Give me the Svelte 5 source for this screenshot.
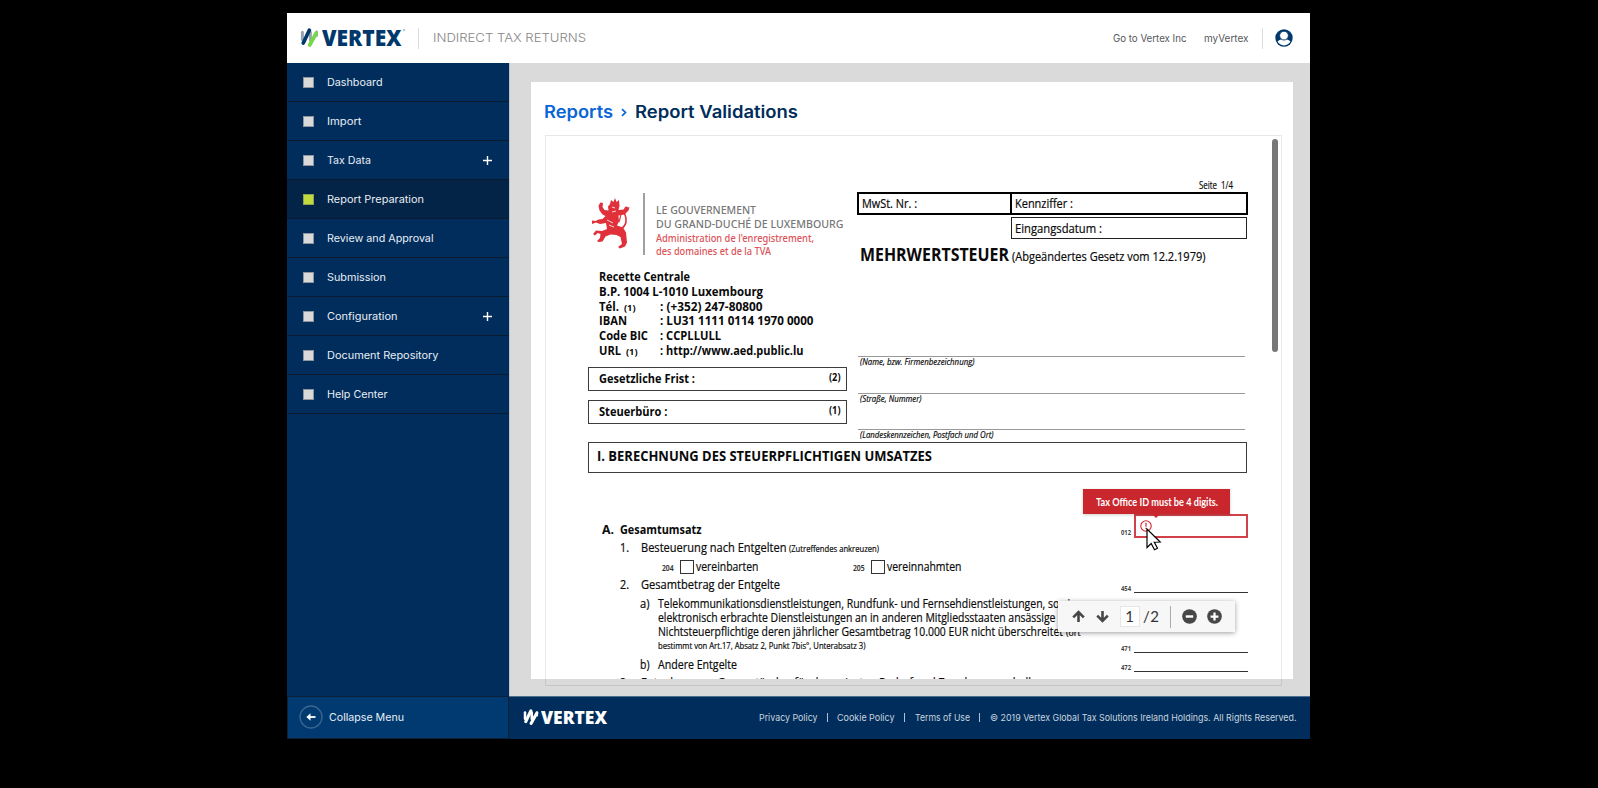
<script>
  // Stretches or condenses a run of text to the given width.
  function fit(node, width) {
    const natural = node.getBoundingClientRect().width;
    node.style.width = `${width}px`;
    node.style.transform = `scaleX(${width / natural})`;
  }

  const menu = [
    { label: 'Dashboard', w: 55.5 },
    { label: 'Import', w: 34.5 },
    { label: 'Tax Data', w: 44, plus: true },
    { label: 'Report Preparation', w: 97, active: true },
    { label: 'Review and Approval', w: 106.5 },
    { label: 'Submission', w: 59 },
    { label: 'Configuration', w: 70.5, plus: true },
    { label: 'Document Repository', w: 111.5 },
    { label: 'Help Center', w: 60.5 }
  ];

  const address = [
    { key: 'Tél.', kw: 20, note: true, value: ': (+352) 247-80800', w: 102.5 },
    { key: 'IBAN', kw: 28, value: ': LU31 1111 0114 1970 0000', w: 153.5 },
    { key: 'Code BIC', kw: 49, value: ': CCPLLULL', w: 61 },
    { key: 'URL', kw: 22, note: true, value: ': http://www.aed.public.lu', w: 143.5 }
  ];
</script>

{#snippet t(text, w, cls = '')}<span class="fit {cls}" use:fit={w}>{text}</span>{/snippet}

{#snippet mark(c1, c2, c3, c4)}
  <svg class="mark" viewBox="0 0 18 19" fill="none" stroke-linecap="round">
    <path d="M1.900 4.300V11.500" stroke={c1} stroke-width="3" />
    <path d="M9.900 4.300V12" stroke={c3} stroke-width="3" />
    <path d="M16.200 3.800v4" stroke={c3} stroke-width="2.400" />
    <path d="M8.800 2.200 2.800 15" stroke={c2} stroke-width="3.700" />
    <path d="M15.800 5 9.200 17" stroke={c4} stroke-width="3.700" />
  </svg>
{/snippet}

<div class="stage">
  <div class="app">
    <header>
      <div class="logo">
        {@render mark('#9aa3ad', '#00386b', '#9aa3ad', '#78d64b')}
        {@render t('VERTEX', 79.5)}<i></i>
      </div>
      <span class="rule"></span>
      <div class="product">{@render t('INDIRECT TAX RETURNS', 153)}</div>
      <nav>
        {@render t('Go to Vertex Inc', 73.5)}
        {@render t('myVertex', 44.5)}
      </nav>
      <span class="rule"></span>
      <svg class="user" viewBox="0 0 18 18">
        <circle cx="9" cy="9" r="8.700" fill="#00386b" />
        <path d="M2.500 12.600C4 10.700 6 10.300 9 10.300s5 .4 6.500 2.300C14.200 15 12 16.400 9 16.400S3.800 15 2.500 12.600Z" fill="#fff" />
        <circle cx="9" cy="6.600" r="4.400" fill="#fff" stroke="#00386b" stroke-width=".9" />
      </svg>
    </header>

    <div class="body">
      <aside>
        <ul>
          {#each menu as item}
            <li class:active={item.active}>
              <b></b>
              {@render t(item.label, item.w)}
              {#if item.plus}
                <svg class="plus" viewBox="0 0 9 9"><path d="M4.500 0v9M0 4.500h9" stroke="#fff" stroke-width="1.400" /></svg>
              {/if}
            </li>
          {/each}
        </ul>
        <div class="collapse">
          <svg viewBox="0 0 24 24" fill="none">
            <circle cx="12" cy="12" r="11" stroke="#3a6690" stroke-width="1.300" />
            <path d="M16.500 12H8.500" stroke="#fff" stroke-width="1.800" />
            <path d="M7.400 12l4.100-3.700v7.400z" fill="#fff" />
          </svg>
          {@render t('Collapse Menu', 75)}
        </div>
      </aside>

      <main>
        <section class="content">
          <div class="panel">
            <h1>
              {@render t('Reports', 69, 'blue')}
              <svg viewBox="0 0 6 8" fill="none"><path d="M1 .7 4.500 4 1 7.300" stroke="#0a66d6" stroke-width="1.700" /></svg>
              {@render t('Report Validations', 163)}
            </h1>
            <div class="viewer">
              <div class="page">
                <div class="top">
                  <div class="left">
                    <div class="brand">
                      <svg class="lion" viewBox="0 0 39 52" fill="#e0313a">
                        <path d="M18 6l1-4 2.500 2L23 0l1.500 4L27 2l.5 6-1 4 6-.5 3-2.500 2 .5-1 3-4 4-6 1 .5 6-2 4 6 2 3 5 1 10-2 4-5 2-2-1.500 4-3-1.500-7-4-2-6-.5-5 2-3 5-4 .5-1.500-1 3-3 .500-4-3-1-2.500 2.500-2-1.500 3-3.500 6 .5 5-2-1-6-6 1-4-1.500-5 2-1.500-2.500 3-1.500 3 .5 3-1.500 4-.5 3-3-3-1.500-3-4-1-5 2-3 2.500.5-.5 4 2 3 4 .5-.5-4z" />
                        <path d="M29 31c6-4 6-10 4-14s0-8 2-8" fill="none" stroke="#e0313a" stroke-width="1.600" />
                        <path d="M27 24c2-5 1-8 4-12" fill="none" stroke="#e0313a" stroke-width="1.200" />
                        <path d="M15 22l6 3M17 27l5 2M20 9l3 1M20 14l4-1" stroke="#fff" stroke-width=".8" />
                      </svg>
                      <span class="bar"></span>
                      <div class="gov">
                        <div>{@render t('LE GOUVERNEMENT', 100)}</div>
                        <div>{@render t('DU GRAND-DUCHÉ DE LUXEMBOURG', 187.500)}</div>
                        <div class="red">{@render t("Administration de l'enregistrement,", 158)}</div>
                        <div class="red">{@render t('des domaines et de la TVA', 115)}</div>
                      </div>
                    </div>
                    <div class="address">
                      <div>{@render t('Recette Centrale', 91)}</div>
                      <div>{@render t('B.P. 1004 L-1010 Luxembourg', 164)}</div>
                      {#each address as a}
                        <div>
                          <span class="key">{@render t(a.key, a.kw)}{#if a.note}{@render t('(1)', 11.500, 'note')}{/if}</span>
                          {@render t(a.value, a.w)}
                        </div>
                      {/each}
                    </div>
                    <div class="box">{@render t('Gesetzliche Frist :', 96)}{@render t('(2)', 11.500, 'num')}</div>
                    <div class="box">{@render t('Steuerbüro :', 68.500)}{@render t('(1)', 11.500, 'num')}</div>
                  </div>

                  <div class="right">
                    <div class="seite">{@render t('Seite  1/4', 34)}</div>
                    <div class="ids">
                      <div>{@render t('MwSt. Nr. :', 55)}</div>
                      <div>{@render t('Kennziffer :', 58)}</div>
                    </div>
                    <div class="date">{@render t('Eingangsdatum :', 87)}</div>
                    <div class="law">{@render t('MEHRWERTSTEUER', 149, 'big')}{@render t('(Abgeändertes Gesetz vom 12.2.1979)', 193.500)}</div>
                    <div class="line">{@render t('(Name, bzw. Firmenbezeichnung)', 114.500)}</div>
                    <div class="line">{@render t('(Straße, Nummer)', 61.500)}</div>
                    <div class="line">{@render t('(Landeskennzeichen, Postfach und Ort)', 133.500)}</div>
                  </div>
                </div>

                <div class="section">{@render t('I. BERECHNUNG DES STEUERPFLICHTIGEN UMSATZES', 335)}</div>

                <div class="calc">
                  <div class="items">
                    <div class="row a">{@render t('A.', 12)}{@render t('Gesamtumsatz', 81.500)}</div>
                    <div class="row n one">{@render t('1.', 9)}{@render t('Besteuerung nach Entgelten', 145.500)}{@render t('(Zutreffendes ankreuzen)', 90, 'small')}</div>
                    <div class="row checks">
                      <div>{@render t('204', 11.500, 'code')}<i></i>{@render t('vereinbarten', 62.500)}</div>
                      <div>{@render t('205', 11.500, 'code')}<i></i>{@render t('vereinnahmten', 74.500)}</div>
                    </div>
                    <div class="row n two">{@render t('2.', 9)}{@render t('Gesamtbetrag der Entgelte', 139)}</div>
                    <div class="row l">
                      {@render t('a)', 9.500)}
                      <div class="para">
                        <div>{@render t('Telekommunikationsdienstleistungen, Rundfunk- und Fernsehdienstleistungen, sowie', 418)}</div>
                        <div>{@render t('elektronisch erbrachte Dienstleistungen an in anderen Mitgliedsstaaten ansässige', 397.500)}</div>
                        <div>{@render t('Nichtsteuerpflichtige deren jährlicher Gesamtbetrag 10.000 EUR nicht überschreitet', 405)}{@render t('(ort', 14.500, 'small')}</div>
                        <div>{@render t('bestimmt von Art.17, Absatz 2, Punkt 7bis°, Unterabsatz 3)', 207.500, 'small first')}</div>
                      </div>
                    </div>
                    <div class="row l b">{@render t('b)', 9.500)}{@render t('Andere Entgelte', 79)}</div>
                    <div class="row n three">{@render t('3.', 9)}{@render t('Entnahme von Gegenständen für den privaten Bedarf und Zwecke ausserhalb', 394)}</div>
                  </div>
                  <div class="fields">
                    <div class="field bad">{@render t('012', 10)}<div class="input">
                        <svg viewBox="0 0 12 12" fill="none" stroke="#cc2730"><circle cx="6" cy="6" r="5.200" stroke-width="1.100" /><path d="M6 2.800v4M6 7.800v1.300" stroke-width="1.200" /></svg>
                      </div>
                      <div class="tip">{@render t('Tax Office ID must be 4 digits.', 122)}</div>
                      <svg class="cursor" viewBox="0 0 16 23"><path d="M1 1v18.500l4.200-4 3.300 6.300 3-1.500-3.200-6.100 5.900-.2z" fill="#fff" stroke="#000" stroke-width="1.200" /></svg>
                    </div>
                    <div class="field f454">{@render t('454', 10)}<span></span></div>
                    <div class="field f471">{@render t('471', 10)}<span></span></div>
                    <div class="field f472">{@render t('472', 10)}<span></span></div>
                  </div>
                </div>
              </div>
              <span class="thumb"></span>
              <div class="toolbar">
                <svg class="arrow" viewBox="0 0 14 14" fill="none" stroke="#474747" stroke-width="2.800"><path d="M7 13V2.800M1.300 8 7 2.300 12.700 8" /></svg>
                <svg class="arrow down" viewBox="0 0 14 14" fill="none" stroke="#474747" stroke-width="2.800"><path d="M7 1v10.200M1.300 6 7 11.700 12.700 6" /></svg>
                <span class="current">1</span>
                <span class="total">/2</span>
                <span class="sep"></span>
                <svg class="zoom" viewBox="0 0 16 16"><circle cx="8" cy="8" r="7.800" fill="#474747" /><path d="M4 8h8" stroke="#fff" stroke-width="2.600" /></svg>
                <svg class="zoom" viewBox="0 0 16 16"><circle cx="8" cy="8" r="7.800" fill="#474747" /><path d="M3.800 8h8.400M8 3.800v8.400" stroke="#fff" stroke-width="2.400" /></svg>
              </div>
            </div>
          </div>
        </section>
        <footer>
          <div class="logo small-logo">
            {@render mark('#fff', '#fff', '#fff', '#fff')}
            {@render t('VERTEX', 66)}
          </div>
          <div class="legal">
            {@render t('Privacy Policy', 58.500)}<em></em>
            {@render t('Cookie Policy', 57.500)}<em></em>
            {@render t('Terms of Use', 55)}<em></em>
            {@render t('© 2019 Vertex Global Tax Solutions Ireland Holdings. All Rights Reserved.', 306.500)}
          </div>
        </footer>
      </main>
    </div>
  </div>
</div>

<style>
  :global(body) { background: #000; }
  .stage {
    box-sizing: border-box;
    width: 1598px;
    height: 788px;
    padding: 13px 288px 0 287px;
    background: #000;
    overflow: hidden;
    font-family: Inter, sans-serif;
  }
  .stage :global(svg) { display: block; flex: none; }
  .fit {
    display: inline-block;
    flex: none;
    white-space: pre;
    transform-origin: 0 50%;
  }
  .app { width: 1023px; height: 726px; display: flex; flex-direction: column; }
  header {
    height: 50px;
    background: #fff;
    display: flex;
    align-items: center;
    flex: none;
    box-sizing: border-box;
    padding: 0 17px 0 13px;
  }
  .logo {
    display: flex;
    align-items: center;
    width: 118px;
    height: 50px;
    color: #00386b;
    font: 800 22px/22px "Open Sans", sans-serif;
  }
  .logo .mark { width: 19px; height: 19px; margin: -1px 3px 0 0; }
  .logo .fit { margin-top: -2px; }
  .logo i { width: 2px; height: 2px; border-radius: 1px; background: #9fb4c8; margin: -16px 0 0 1px; }
  .rule { width: 1px; height: 21px; background: #dcdcdc; flex: none; }
  .product { margin-left: 14px; font-size: 11.800px; color: #868686; font-weight: 300; }
  header nav { margin-left: auto; margin-right: 14px; display: flex; gap: 17.500px; font-size: 10.300px; color: #58595b; }
  .user { width: 18px; height: 18px; margin-left: 12px; margin-top: -1px; }

  .body { display: flex; flex: 1; min-height: 0; }
  aside {
    width: 222px;
    flex: none;
    background: #002d5c;
    display: flex;
    flex-direction: column;
    justify-content: space-between;
    color: #e9eef4;
    font-size: 10.300px;
  }
  ul { list-style: none; margin: 0; padding: 0; }
  li {
    height: 39px;
    box-sizing: border-box;
    border-bottom: 1px solid #0b1c30;
    padding: 0 17px 0 16px;
    display: flex;
    align-items: center;
  }
  li.active { background: #032347; }
  li b { width: 11px; height: 11px; box-sizing: border-box; background: #d9d9d9; border: 1px solid #8f969f; margin-right: 12.500px; }
  li.active b { background: #c3da3c; border-color: #8fa352; }
  .plus { width: 9px; height: 9px; margin-left: auto; }
  .collapse {
    height: 43px;
    box-sizing: border-box;
    border: 1px solid #0c2038;
    background: #003a70;
    display: flex;
    align-items: center;
    gap: 6px;
    padding: 0 0 2px 10.500px;
  }
  .collapse svg { width: 24px; height: 24px; }

  main { flex: 1; display: flex; flex-direction: column; min-width: 0; }
  .content {
    flex: 1;
    min-height: 0;
    box-sizing: border-box;
    background: #dadada;
    border-left: 1px solid #bdc2c9;
    padding: 19px 17px 17px 21px;
  }
  .panel { height: 597px; box-sizing: border-box; background: #fff; padding: 18px 0 0 14px; }
  h1 { margin: 0 0 0 -1px; height: 35px; display: flex; font-size: 17px; line-height: 24px; font-weight: 600; color: #002d5c; }
  .blue { color: #0a66d6; }
  h1 svg { width: 6px; height: 9px; margin: 8px 8px 0 8px; }
  .viewer {
    position: relative;
    width: 737px;
    height: 551px;
    box-sizing: border-box;
    border: 1px solid rgba(0, 0, 0, .09);
  }
  .page {
    height: 543px;
    box-sizing: border-box;
    overflow: hidden;
    padding-left: 42px;
    font-family: "Open Sans", sans-serif;
    font-size: 12px;
    -webkit-text-stroke: .2px;
    line-height: 14px;
    color: #0a0a0a;
  }
  .thumb { position: absolute; left: 726px; top: 3px; width: 5.500px; height: 213px; border-radius: 3px; background: #777; }

  .top { display: flex; height: 306px; }
  .left { width: 259px; padding-top: 57px; font-weight: 700; -webkit-text-stroke: 0; }
  .brand { display: flex; height: 76px; }
  .lion { width: 39px; height: 52px; margin: 5px 12px 0 4px; }
  .bar { width: 1.500px; height: 62px; background: #a0a0a0; }
  .gov { margin: 11px 0 0 11px; font-family: "Noto Sans", sans-serif; font-size: 10.300px; line-height: 13.800px; font-weight: 500; color: #777; white-space: nowrap; }
  .gov div { height: 13.800px; }
  .gov .red { color: #dc5358; }
  .address { height: 98px; padding-left: 11px; font-size: 11.800px; line-height: 14.800px; box-sizing: border-box; }
  .address div { display: flex; align-items: baseline; height: 14.800px; }
  .key { width: 61px; display: flex; align-items: baseline; gap: 5px; }
  .note { font-size: 9.300px; }
  .box {
    height: 24px;
    box-sizing: border-box;
    border: 1px solid #3c3c3c;
    padding: 4px 6px 0 10px;
    display: flex;
    justify-content: space-between;
  }
  .box + .box { margin-top: 9px; }
  .num { font-size: 10px; line-height: 12px; margin-top: -1px; }

  .right { width: 391px; margin-left: 10px; padding-top: 43px; }
  .seite { font-size: 10px; line-height: 12px; height: 13px; padding-left: 342px; }
  .ids { display: flex; height: 23px; box-sizing: border-box; border: 2px solid #000; }
  .ids div { width: 151px; padding: 3px 0 0 3px; box-sizing: border-box; }
  .ids div + div { width: 236px; border-left: 2px solid #000; }
  .date { margin: 2px 1px 0 154px; height: 22px; box-sizing: border-box; border: 1px solid #222; padding: 4px 0 0 3px; }
  .law { display: flex; align-items: baseline; gap: 3px; height: 24px; margin: 4px 0 89px 2.500px; line-height: 24px; }
  .big { font-size: 17.300px; font-weight: 700; -webkit-text-stroke: 0; }
  .line { height: 36.500px; width: 387px; margin-left: 1px; box-sizing: border-box; border-top: 1px solid #999; padding-left: 2px; font-size: 9px; font-style: italic; line-height: 9px; }

  .section {
    width: 659px;
    height: 31px;
    box-sizing: border-box;
    border: 1px solid #3c3c3c;
    padding-left: 8px;
    font-size: 13.400px;
    font-weight: 700;
    line-height: 27px;
    -webkit-text-stroke: 0;
  }
  .calc { display: flex; }
  .items { width: 533px; box-sizing: border-box; padding: 49.500px 0 0 14px; flex: none; }
  .row { display: flex; align-items: baseline; height: 18px; }
  .a { gap: 6px; font-weight: 700; -webkit-text-stroke: 0; }
  .n, .checks { padding-left: 18px; }
  .n { gap: 11.500px; }
  .n .small { margin-left: -8.500px; }
  .small { font-size: 8.900px; }
  .one { height: 19px; }
  .checks { height: 18px; padding-left: 59.500px; gap: 95px; }
  .checks div { display: flex; width: 96px; align-items: baseline; flex: none; }
  .checks i { flex: none; width: 14px; height: 14px; box-sizing: border-box; border: 1px solid #333; margin: 0 1.500px 0 7px; align-self: flex-start; }
  .code { font-size: 8px; font-weight: 600; color: #333; }
  .two { height: 19.500px; }
  .l { padding-left: 38px; gap: 8px; height: 60.500px; }
  .para div { height: 14px; display: flex; align-items: baseline; gap: 3px; }
  .l.b { height: 18px; }

  .fields { width: 128px; font-size: 7.300px; font-weight: 700; color: #444; -webkit-text-stroke: 0; }
  .field { display: flex; align-items: flex-end; gap: 3px; line-height: 10px; position: relative; }
  .field > span:last-child { width: 114px; height: 1.300px; background: #333; }
  .input { width: 114px; height: 24px; box-sizing: border-box; border: 2px solid #d2414a; }
  .input svg { width: 12px; height: 12px; margin: 4px 0 0 4px; }
  .bad { margin-top: 41px; height: 24px; }
  .bad > .fit { margin-bottom: 1px; }
  .f454 { height: 55px; }
  .f471 { height: 60px; }
  .f472 { height: 19px; }
  .tip {
    position: absolute;
    left: -38px;
    top: -25px;
    width: 147px;
    height: 25px;
    box-sizing: border-box;
    padding-left: 13px;
    background: #c9262e;
    color: #fff;
    font: 700 10.500px/26px Lato, sans-serif;
    box-shadow: 0 1px 3px rgba(0, 0, 0, .2);
  }
  .tip::after { content: ""; position: absolute; left: 69px; top: 25px; border: 4px solid transparent; border-top-color: #c9262e; border-bottom: 0; }
  .cursor { position: absolute; left: 25px; top: 14px; width: 16px; height: 23px; }

  .toolbar {
    position: absolute;
    left: 512px;
    top: 465px;
    width: 177px;
    height: 31px;
    box-sizing: border-box;
    padding-left: 14px;
    display: flex;
    align-items: center;
    background: #f7f7f7;
    box-shadow: 0 1px 5px rgba(0, 0, 0, .38);
    color: #333;
    font: 400 15px/21px Lato, sans-serif;
  }
  .arrow { width: 13px; height: 13px; }
  .down { margin-left: 11px; }
  .current { width: 20px; height: 21px; box-sizing: border-box; border: 1px solid #e6e6e6; background: #fff; line-height: 19px; text-align: center; margin-left: 10.500px; }
  .total { margin-left: 3.500px; width: 27px; letter-spacing: .5px; }
  .sep { width: 1px; height: 22px; background: #aaa; margin-right: 10.500px; }
  .zoom { width: 15px; height: 15px; margin-right: 10.500px; }

  footer {
    height: 43px;
    box-sizing: border-box;
    border-top: 1px solid #4e6e90;
    background: #002d5c;
    display: flex;
    align-items: center;
    justify-content: space-between;
    padding: 0 14px 1.500px 14px;
    color: #c8d3df;
    font-size: 9.600px;
  }
  .small-logo { width: auto; height: 30px; color: #fff; font-size: 17.600px; }
  .small-logo .mark { width: 16px; height: 16px; margin-right: 2px; }
  .small-logo .fit { margin-top: 0; }
  .legal { display: flex; align-items: center; }
  .legal em { width: 1px; height: 9px; background: #b3c1d1; margin: 0 9.500px; }
</style>
